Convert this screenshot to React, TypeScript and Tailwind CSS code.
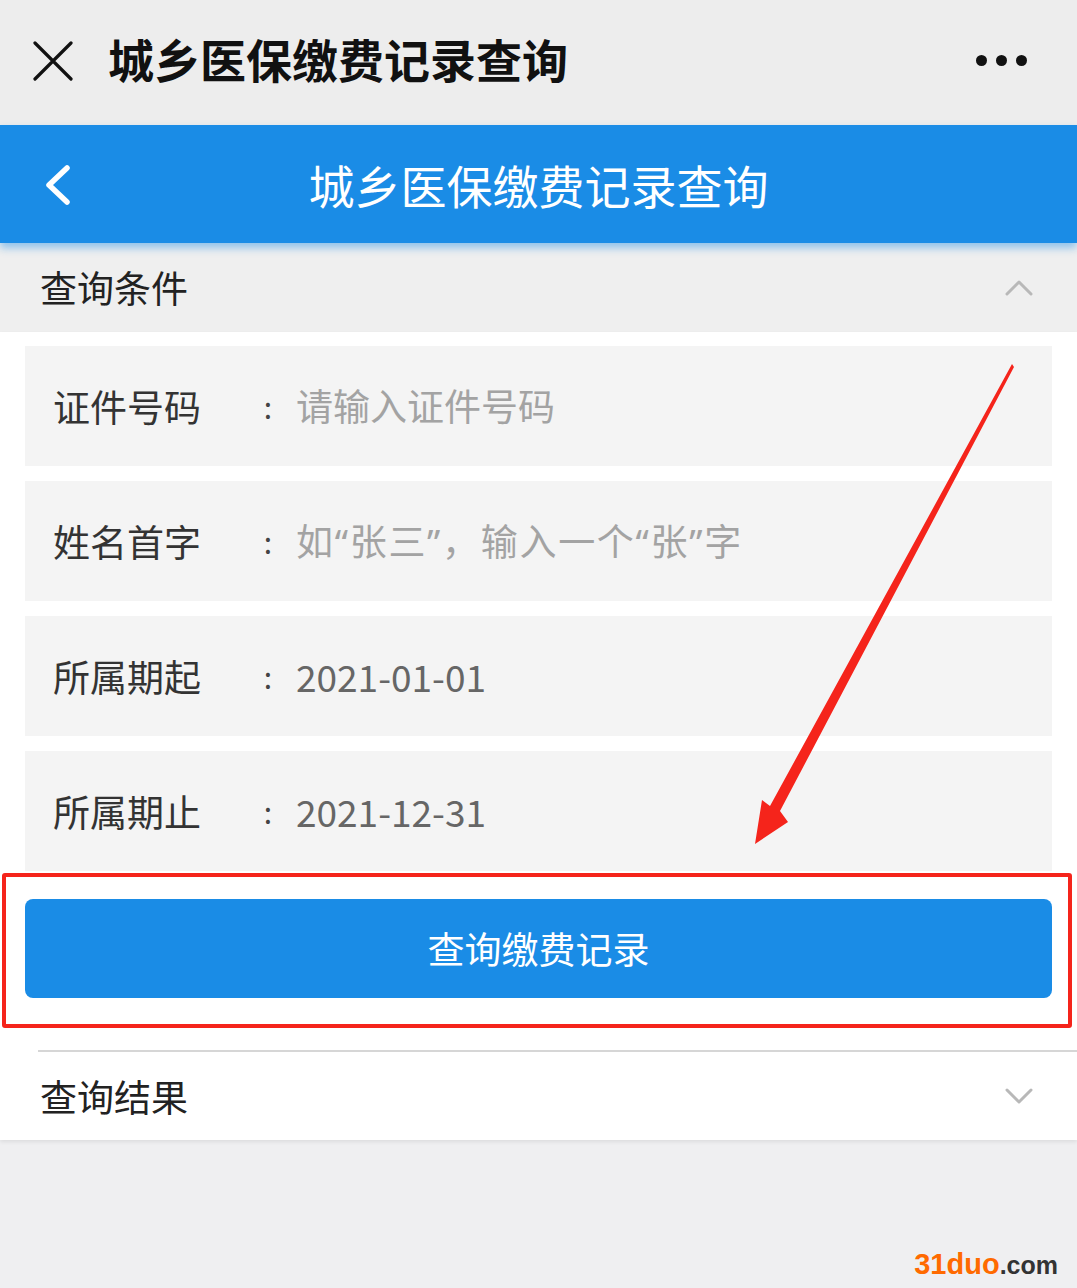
const rows = [
  { label: '证件号码', value: '请输入证件号码', placeholder: true, wide: false },
  { label: '姓名首字', value: '如“张三”，输入一个“张”字', placeholder: true, wide: true },
  { label: '所属期起', value: '2021-01-01', placeholder: false, wide: false },
  { label: '所属期止', value: '2021-12-31', placeholder: false, wide: false },
]

function Chevron({ up }: { up?: boolean }) {
  return (
    <svg width="28" height="18" viewBox="0 0 28 18" className="text-[#b8b8b8]">
      <polyline
        points={up ? '2,15 14,3 26,15' : '2,3 14,15 26,3'}
        fill="none"
        stroke="currentColor"
        strokeWidth="3"
        strokeLinecap="round"
        strokeLinejoin="round"
      />
    </svg>
  )
}

function FormRow({
  label,
  value,
  placeholder,
  wide,
}: {
  label: string
  value: string
  placeholder: boolean
  wide: boolean
}) {
  return (
    <div className="flex h-[120px] items-center bg-[#f4f4f4] pl-[28px]">
      <span className="w-[207px] text-[37px] leading-none text-[#333]">{label}</span>
      <span className="w-[16px] text-center text-[30px] leading-none text-[#444]">:</span>
      <span
        className={`ml-[20px] text-[37px] leading-none ${
          placeholder
            ? "font-['Noto_Sans','Noto_Sans_CJK_SC',sans-serif] text-[#a3a3a3]"
            : 'text-[#666]'
        } ${wide ? 'tracking-[1.7px]' : ''}`}
      >
        {value}
      </span>
    </div>
  )
}

export default function App() {
  return (
    <div className="relative h-[1288px] w-[1077px] overflow-hidden bg-[#efeff1] font-['Noto_Sans_CJK_SC','Noto_Sans',sans-serif]">
      {/* wechat top bar */}
      <div className="flex h-[125px] items-center bg-[#ededed] pl-[33px] pr-[50px]">
        <svg width="40" height="40" viewBox="0 0 40 40" className="mb-[4px] text-[#111]">
          <path d="M2 2 L38 38 M38 2 L2 38" stroke="currentColor" strokeWidth="3.2" strokeLinecap="round" />
        </svg>
        <span className="mb-[10px] ml-[35px] text-[46px] font-bold leading-none text-[#111]">城乡医保缴费记录查询</span>
        <div className="mb-[4px] ml-auto flex items-center gap-[9px]">
          <span className="h-[11px] w-[11px] rounded-full bg-[#111]" />
          <span className="h-[11px] w-[11px] rounded-full bg-[#111]" />
          <span className="h-[11px] w-[11px] rounded-full bg-[#111]" />
        </div>
      </div>

      {/* blue header */}
      <div className="relative z-10 flex h-[118px] items-center bg-[#1a8ce6] shadow-[0_5px_8px_rgba(26,140,230,0.45)]">
        <svg width="30" height="42" viewBox="0 0 30 42" className="absolute left-[43px] top-[39px] text-white">
          <polyline points="24,4 6,21 24,38" fill="none" stroke="currentColor" strokeWidth="5.5" strokeLinecap="round" strokeLinejoin="round" />
        </svg>
        <span className="w-full text-center text-[46px] leading-none text-white">城乡医保缴费记录查询</span>
      </div>

      {/* query conditions */}
      <div className="flex h-[89px] items-center justify-between bg-[#efefef] pl-[40px] pr-[44px]">
        <span className="text-[37px] leading-none text-[#222]">查询条件</span>
        <Chevron up />
      </div>

      <div className="bg-white shadow-[0_2px_4px_rgba(0,0,0,0.08)]">
        <div className="flex flex-col gap-[15px] px-[25px] pt-[14px]">
          {rows.map((r) => (
            <FormRow key={r.label} {...r} />
          ))}
        </div>

        <div className="relative mx-[25px] mt-[28px]">
          <button className="flex h-[99px] w-full items-center justify-center rounded-[8px] bg-[#1a8ce6] text-[37px] leading-none text-white">
            查询缴费记录
          </button>
          {/* annotation box */}
          <div className="pointer-events-none absolute -left-[23px] -right-[20px] -top-[26px] -bottom-[30px] rounded-[3px] border-[4px] border-[#f5241b]" />
        </div>

        <div className="ml-[38px] mt-[52px] border-t-[2px] border-[#d6d6d6]" />
        <div className="flex h-[88px] items-center justify-between pl-[40px] pr-[44px]">
          <span className="text-[37px] leading-none text-[#222]">查询结果</span>
          <Chevron />
        </div>
      </div>

      {/* annotation arrow */}
      <svg className="pointer-events-none absolute left-0 top-0" width="1077" height="1288">
        <polygon points="1012,364 1014,367 780,811 788,822 755,844 762,800 770,806" fill="#f5241b" />
      </svg>

      {/* watermark */}
      <div className="absolute bottom-[9px] right-[19px] flex items-baseline font-['Liberation_Sans',sans-serif] font-bold leading-none">
        <span className="text-[29px] text-[#ff6a00]">31duo</span>
        <span className="text-[25px] text-[#333]">.com</span>
      </div>
    </div>
  )
}
